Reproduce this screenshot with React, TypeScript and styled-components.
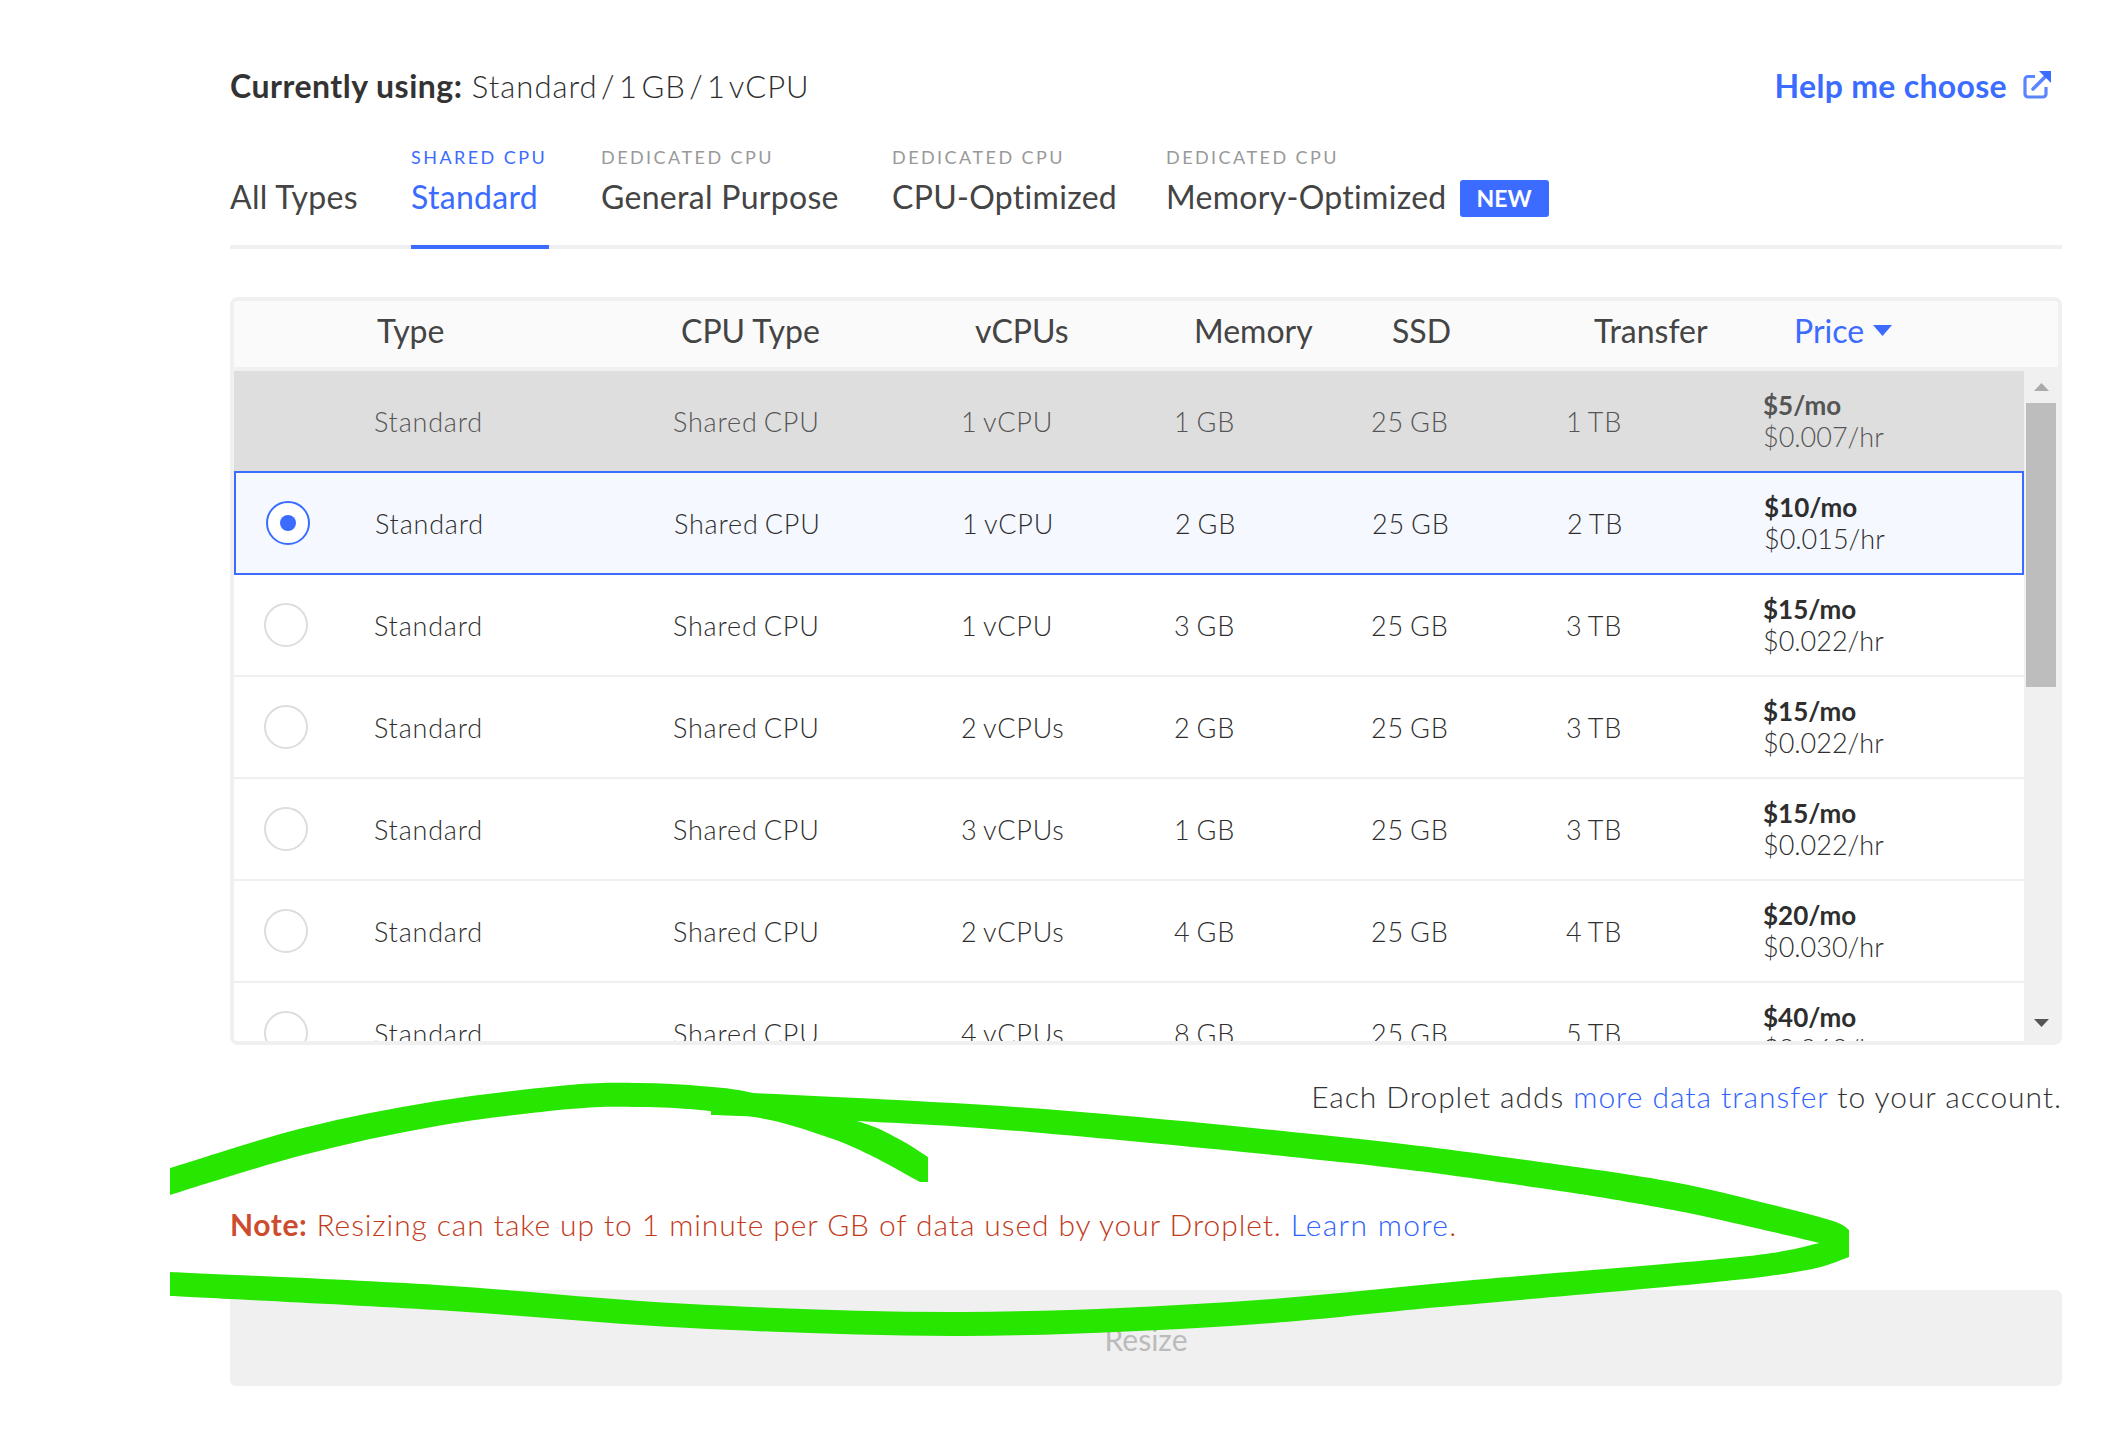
import React from "react";
import styled, { createGlobalStyle } from "styled-components";

const BLUE = "#3b6cff";

const GlobalStyle = createGlobalStyle`
  html, body {
    margin: 0;
    padding: 0;
    background: #fff;
  }
  body {
    font-family: Lato, "Open Sans", Arial, sans-serif;
    color: #444;
  }
  * {
    box-sizing: border-box;
  }
`;

const Page = styled.div`
  position: relative;
  width: 2112px;
  height: 1430px;
  overflow: hidden;
  padding: 65px 50px 0 230px;
`;

const TopBar = styled.div`
  display: flex;
  justify-content: space-between;
  align-items: center;
  height: 40px;
`;

const Using = styled.div`
  font-size: 31px;
  font-weight: 300;
  letter-spacing: 1px;
  word-spacing: -6px;
  color: #2e2e2e;
  b {
    font-size: 32px;
    font-weight: 700;
    letter-spacing: 0.5px;
    word-spacing: 0;
    margin-right: 6px;
    color: #333;
  }
`;

const Help = styled.a`
  display: flex;
  align-items: center;
  gap: 16px;
  padding-right: 11px;
  font-size: 32px;
  font-weight: 700;
  letter-spacing: 0.3px;
  color: ${BLUE};
`;

const Tabs = styled.div`
  display: grid;
  grid-template-columns: 181px 190px 291px 274px 1fr;
  height: 132px;
  margin-top: 12px;
  border-bottom: 4px solid #f0f0f0;
`;

const Tab = styled.div<{ $active?: boolean }>`
  position: relative;
  display: flex;
  flex-direction: column;
  justify-content: flex-end;
  padding-bottom: 29px;
  color: ${(p) => (p.$active ? BLUE : "#444")};
  &::after {
    content: "";
    display: ${(p) => (p.$active ? "block" : "none")};
    position: absolute;
    left: 0;
    width: 138px;
    bottom: -4px;
    height: 4px;
    background: ${BLUE};
  }
`;

const Eyebrow = styled.div<{ $active?: boolean }>`
  height: 30px;
  font-size: 18px;
  font-weight: 400;
  letter-spacing: 2.45px;
  color: ${(p) => (p.$active ? BLUE : "#999")};
`;

const TabLabel = styled.div`
  display: flex;
  align-items: center;
  height: 40px;
  font-size: 32px;
  font-weight: 400;
  letter-spacing: 0.3px;
`;

const NewBadge = styled.span`
  flex: none;
  margin-left: 13px;
  width: 89px;
  height: 37px;
  margin-top: 5px;
  border-radius: 3px;
  background: ${BLUE};
  color: #fff;
  font-size: 23px;
  font-weight: 700;
  letter-spacing: 0;
  line-height: 37px;
  text-align: center;
`;

const Table = styled.div`
  margin-top: 48px;
  height: 748px;
  border: 4px solid #f0f0f0;
  border-radius: 8px;
  overflow: hidden;
`;

const HeadRow = styled.div`
  display: grid;
  grid-template-columns: 143px 304px 294px 219px 198px 202px 200px 1fr;
  align-items: center;
  height: 70px;
  padding-bottom: 7px;
  background: #fafafa;
  border-bottom: 4px solid #f0f0f0;
`;

const HeadCell = styled.div<{ $active?: boolean }>`
  display: flex;
  align-items: center;
  gap: 9px;
  font-size: 32px;
  font-weight: 400;
  color: ${(p) => (p.$active ? BLUE : "#444")};
`;

const Body = styled.div`
  display: flex;
  height: 670px;
`;

const RowList = styled.div`
  width: 1790px;
  overflow: hidden;
  flex: none;
`;

const Row = styled.div<{ $selected?: boolean; $disabled?: boolean }>`
  position: relative;
  display: grid;
  grid-template-columns: 140px 299px 288px 213px 197px 195px 197px 1fr;
  align-items: center;
  height: ${(p) => (p.$selected ? "104px" : "102px")};
  margin-top: ${(p) => (p.$selected ? "-2px" : "0")};
  padding-left: ${(p) => (p.$selected ? "1px" : "0")};
  border-bottom: ${(p) => (p.$selected ? "0" : "2px solid #f0f0f0")};
  background: ${(p) => (p.$selected ? "#f5f8ff" : p.$disabled ? "#dedede" : "#fff")};
  color: ${(p) => (p.$disabled ? "#555" : "#2e2e2e")};
  box-shadow: ${(p) => (p.$selected ? `inset 0 0 0 2px ${BLUE}` : "none")};
`;

const Radio = styled.span<{ $selected?: boolean }>`
  display: flex;
  align-items: center;
  justify-content: center;
  justify-self: start;
  width: 44px;
  height: 44px;
  margin-left: ${(p) => (p.$selected ? "31px" : "30px")};
  border-radius: 50%;
  border: 2px solid ${(p) => (p.$selected ? BLUE : "#ddd")};
  background: #fff;
  &::after {
    content: "";
    display: ${(p) => (p.$selected ? "block" : "none")};
    width: 16px;
    height: 16px;
    border-radius: 50%;
    background: ${BLUE};
  }
`;

const Cell = styled.div`
  font-size: 27px;
  font-weight: 300;
  letter-spacing: 0.8px;
  word-spacing: -2px;
`;

const PriceCell = styled.div`
  font-size: 27px;
  line-height: 31px;
  font-weight: 300;
  b {
    display: block;
    font-size: 26px;
    font-weight: 700;
  }
`;

const Scrollbar = styled.div`
  flex: none;
  width: 34px;
  background: #f0f0f0;
  display: flex;
  flex-direction: column;
  align-items: center;
`;

const ArrowButton = styled.div<{ $down?: boolean }>`
  flex: none;
  display: flex;
  align-items: center;
  justify-content: center;
  height: 32px;
  width: 100%;
  padding-bottom: ${(p) => (p.$down ? "4px" : "0")};
  color: ${(p) => (p.$down ? "#555" : "#aaa")};
`;

const Thumb = styled.div`
  flex: none;
  width: 30px;
  height: 284px;
  background: #bdbdbd;
`;

const Spacer = styled.div`
  flex: 1;
`;

const TransferNote = styled.div`
  margin-top: 31px;
  height: 40px;
  line-height: 40px;
  text-align: right;
  font-size: 30px;
  font-weight: 300;
  letter-spacing: 0.95px;
  color: #333;
  a {
    color: #2f62ff;
  }
`;

const ResizeNote = styled.div`
  margin-top: 88px;
  height: 40px;
  line-height: 40px;
  font-size: 30px;
  font-weight: 300;
  letter-spacing: 0.9px;
  color: #c23a1a;
  b {
    font-weight: 700;
    letter-spacing: 0.6px;
    color: #cd4c2f;
  }
  a {
    color: #2f62ff;
    letter-spacing: 1.3px;
  }
`;

const ResizeButton = styled.div`
  margin-top: 46px;
  height: 96px;
  padding-top: 31px;
  border-radius: 6px;
  background: #f0f0f0;
  color: #bbb;
  font-size: 30px;
  font-weight: 400;
  text-align: center;
`;

const Scribble = styled.svg`
  position: absolute;
  left: 0;
  top: 0;
  pointer-events: none;
`;

type Pt = [number, number];

// catmull-rom through the traced edge of the marker stroke
const curve = (pts: Pt[]) => {
  let d = "";
  for (let i = 0; i < pts.length - 1; i++) {
    const p0 = pts[i - 1] || pts[i];
    const p1 = pts[i];
    const p2 = pts[i + 1];
    const p3 = pts[i + 2] || p2;
    const c1 = [p1[0] + (p2[0] - p0[0]) / 6, p1[1] + (p2[1] - p0[1]) / 6];
    const c2 = [p2[0] - (p3[0] - p1[0]) / 6, p2[1] - (p3[1] - p1[1]) / 6];
    d += `C${c1[0]} ${c1[1]} ${c2[0]} ${c2[1]} ${p2[0]} ${p2[1]}`;
  }
  return d;
};

const arcTop: Pt[] = [[170, 1168], [303, 1128], [437, 1101], [570, 1085], [640, 1083], [700, 1086], [753, 1093], [857, 1121], [897, 1138], [928, 1157]];
const arcBottom: Pt[] = [[920, 1182], [870, 1155], [830, 1138], [770, 1120], [700, 1110], [640, 1107], [570, 1109], [437, 1126], [303, 1155], [170, 1195]];
const outerTop: Pt[] = [[711, 1091], [1030, 1108], [1350, 1138], [1540, 1162], [1673, 1182], [1773, 1205], [1833, 1221], [1849, 1230]];
const lowerBottom: Pt[] = [[1849, 1257], [1807, 1270], [1707, 1283], [1440, 1307], [1230, 1326], [963, 1336], [690, 1328], [437, 1310], [170, 1296]];
const lowerTop: Pt[] = [[170, 1272], [437, 1285], [690, 1304], [963, 1312], [1230, 1302], [1473, 1280], [1740, 1257], [1820, 1243]];
const innerBottom: Pt[] = [[1820, 1243], [1773, 1232], [1673, 1210], [1540, 1188], [1350, 1163], [1030, 1132], [857, 1121], [711, 1115]];

const start = (p: Pt) => `M${p[0]} ${p[1]}`;
const arcPath = `${start(arcTop[0])}${curve(arcTop)}L928 1182L920 1182${curve(arcBottom)}Z`;
const loopPath =
  `${start(outerTop[0])}${curve(outerTop)}L1849 1257${curve(lowerBottom)}L170 1272` +
  `${curve(lowerTop)}${curve(innerBottom)}Z`;

const rows = [
  { mem: "1 GB", cpus: "1 vCPU", tb: "1 TB", mo: "$5/mo", hr: "$0.007/hr", disabled: true },
  { mem: "2 GB", cpus: "1 vCPU", tb: "2 TB", mo: "$10/mo", hr: "$0.015/hr", selected: true },
  { mem: "3 GB", cpus: "1 vCPU", tb: "3 TB", mo: "$15/mo", hr: "$0.022/hr" },
  { mem: "2 GB", cpus: "2 vCPUs", tb: "3 TB", mo: "$15/mo", hr: "$0.022/hr" },
  { mem: "1 GB", cpus: "3 vCPUs", tb: "3 TB", mo: "$15/mo", hr: "$0.022/hr" },
  { mem: "4 GB", cpus: "2 vCPUs", tb: "4 TB", mo: "$20/mo", hr: "$0.030/hr" },
  { mem: "8 GB", cpus: "4 vCPUs", tb: "5 TB", mo: "$40/mo", hr: "$0.060/hr" },
];

const tabs = [
  { top: "SHARED CPU", label: "Standard", active: true },
  { top: "DEDICATED CPU", label: "General Purpose" },
  { top: "DEDICATED CPU", label: "CPU-Optimized" },
  { top: "DEDICATED CPU", label: "Memory-Optimized", isNew: true },
];

const Triangle = ({ down, w = 15, h = 8 }: { down?: boolean; w?: number; h?: number }) => (
  <svg width={w} height={h} viewBox="0 0 16 9" preserveAspectRatio="none">
    <path d={down ? "M0 0H16L8 9Z" : "M0 9H16L8 0Z"} fill="currentColor" />
  </svg>
);

const ExternalIcon = () => (
  <svg width="28" height="28" viewBox="0 0 28 28" fill="none">
    <path
      d="M12 5.5H5a3 3 0 0 0-3 3V23a3 3 0 0 0 3 3h15a3 3 0 0 0 3-3v-7"
      stroke="#5b84ff"
      strokeWidth="3.2"
    />
    <path d="M22 6 10 18" stroke="#5b84ff" strokeWidth="3.6" strokeLinecap="round" />
    <path d="M16 0H28V12Z" fill={BLUE} />
  </svg>
);

export default function App() {
  return (
    <Page>
      <GlobalStyle />
      <TopBar>
        <Using>
          <b>Currently using:</b> Standard / 1 GB / 1 vCPU
        </Using>
        <Help>
          Help me choose
          <ExternalIcon />
        </Help>
      </TopBar>

      <Tabs>
        <Tab>
          <TabLabel>All Types</TabLabel>
        </Tab>
        {tabs.map((t) => (
          <Tab key={t.label} $active={t.active}>
            <Eyebrow $active={t.active}>{t.top}</Eyebrow>
            <TabLabel>
              {t.label}
              {t.isNew && <NewBadge>NEW</NewBadge>}
            </TabLabel>
          </Tab>
        ))}
      </Tabs>

      <Table>
        <HeadRow>
          <span />
          <HeadCell>Type</HeadCell>
          <HeadCell>CPU Type</HeadCell>
          <HeadCell>vCPUs</HeadCell>
          <HeadCell>Memory</HeadCell>
          <HeadCell>SSD</HeadCell>
          <HeadCell>Transfer</HeadCell>
          <HeadCell $active>
            Price
            <Triangle down w={19} h={11} />
          </HeadCell>
        </HeadRow>
        <Body>
          <RowList>
            {rows.map((r, i) => (
              <Row key={i} $selected={r.selected} $disabled={r.disabled}>
                {r.disabled ? <span /> : <Radio $selected={r.selected} />}
                <Cell>Standard</Cell>
                <Cell>Shared CPU</Cell>
                <Cell>{r.cpus}</Cell>
                <Cell>{r.mem}</Cell>
                <Cell>25 GB</Cell>
                <Cell>{r.tb}</Cell>
                <PriceCell>
                  <b>{r.mo}</b>
                  {r.hr}
                </PriceCell>
              </Row>
            ))}
          </RowList>
          <Scrollbar>
            <ArrowButton>
              <Triangle />
            </ArrowButton>
            <Thumb />
            <Spacer />
            <ArrowButton $down>
              <Triangle down />
            </ArrowButton>
          </Scrollbar>
        </Body>
      </Table>

      <TransferNote>
        Each Droplet adds <a>more data transfer</a> to your account.
      </TransferNote>
      <ResizeNote>
        <b>Note:</b> Resizing can take up to 1 minute per GB of data used by your Droplet.{" "}
        <a>Learn more</a>.
      </ResizeNote>
      <ResizeButton>Resize</ResizeButton>

      <Scribble width="2112" height="1430" viewBox="0 0 2112 1430" fill="#27e600">
        <path d={arcPath} />
        <path d={loopPath} />
      </Scribble>
    </Page>
  );
}
